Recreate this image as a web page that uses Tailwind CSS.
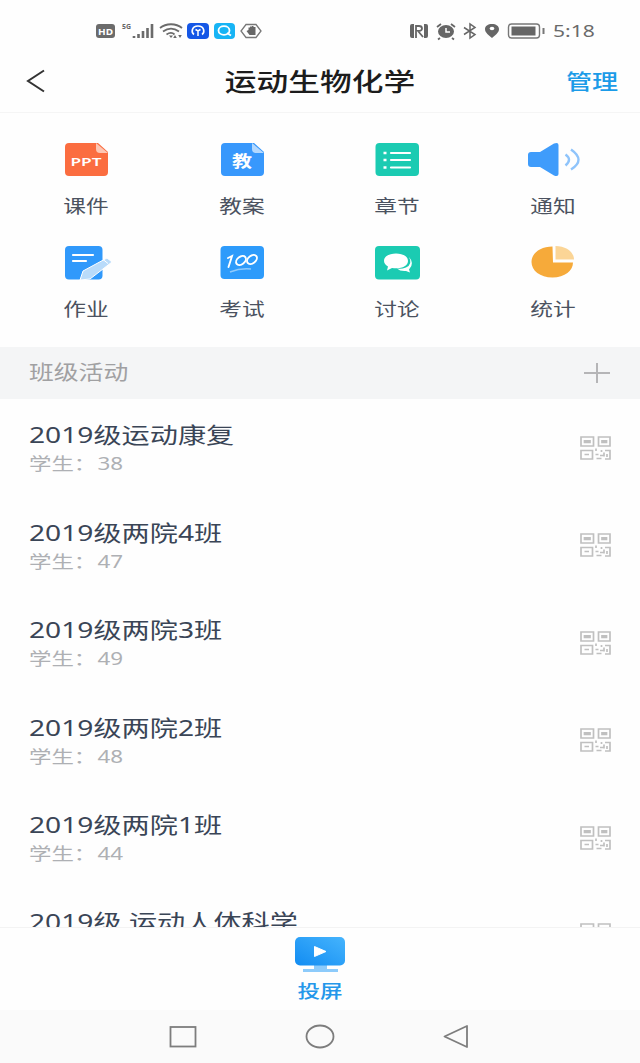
<!DOCTYPE html>
<html lang="zh-CN">

<head>
    <meta charset="UTF-8">
    <meta name="viewport" content="width=device-width, initial-scale=1.0">
    <title>运动生物化学</title>
    <script src="https://cdn.jsdelivr.net/npm/@tailwindcss/browser@4"></script>
</head>

<body class="bg-[#fefefe] font-['Noto_Sans','Noto_Sans_CJK_SC',sans-serif]">
    <!-- QR code icon shared by the class rows -->
    <svg class="hidden">
        <symbol id="qr" viewBox="0 0 31 24">
            <g fill="none" stroke="#c0c0c0" stroke-width="1.700">
                <path d="M1 1h12.500v9H1zM18.500 1h11.500v9H18.500zM1 14.500h11.500v8.500H1z" />
                <path d="M4.500 4.800h5.500v1.500H4.500zM22 4.800h4.500v1.500H22zM4.500 18.500h4.500" />
                <path d="M16 12.500v2.500M15.500 18.500h3M16.500 22.500h5M20 19.500h4M24 16.500v4M25 14.500h5v8.500h-5M27 18v3M21.500 14v2" />
            </g>
        </symbol>
    </svg>

    <div class="flex h-[1063px] w-[640px] flex-col overflow-hidden">
        <!-- Status bar -->
        <div class="flex h-[50px] shrink-0 items-center justify-between pt-[11px] pr-[44px] pl-[95px]">
            <svg class="h-[20px] w-[168px]" viewBox="0 0 168 20" fill="none">
                <rect x="1" y="3" width="19" height="14" rx="3" fill="#6b6b6b" />
                <text x="3" y="13.500" font-size="9.500" font-weight="700" fill="#fff" textLength="15" lengthAdjust="spacingAndGlyphs">HD</text>
                <text x="27" y="8" font-size="7.500" font-weight="700" fill="#666" textLength="9" lengthAdjust="spacingAndGlyphs">5G</text>
                <path d="M39 17v-2M43.500 17v-4M48 17v-7M52.500 17V7M57 17V3" stroke="#6b6b6b" stroke-width="2.600" />
                <path d="M65 7c6-5 16-5 22 0M68 10.500c5-3.500 11-3.500 16 0M71.500 13.500c3-2 6-2 8 0" stroke="#6b6b6b" stroke-width="1.800" />
                <path d="M74 14.500h4l-2 2.500zM80 14l1.800 3h-3.600zM85 17l-1.800-3h3.600z" fill="#6b6b6b" />
                <rect x="92" y="2" width="22" height="16" rx="4" fill="#1557e6" />
                <path d="M99 13.500c-3-2-2.500-8.500 4-8.500s7 6.500 4 8.500" stroke="#fff" stroke-width="1.600" />
                <path d="M100.500 8.500l2.500 1.500 2.500-1.500M103 10v5" stroke="#fff" stroke-width="1.500" />
                <rect x="119" y="2" width="21" height="16" rx="4" fill="#17b4f5" />
                <ellipse cx="129" cy="9.500" rx="5.500" ry="4.300" stroke="#fff" stroke-width="1.800" />
                <path d="M132 12l4 2.500" stroke="#fff" stroke-width="1.800" />
                <path d="M151 3.500h10l5 6.500-5 6.500h-10l-5-6.500z" stroke="#777" stroke-width="1.300" />
                <path d="M151.500 10l2-1V6.500h1.500V5.500h2V5h1.500v1h2V14h-6z" fill="#666" />
            </svg>
            <div class="flex items-center">
                <svg class="h-[20px] w-[138px]" viewBox="0 0 138 20" fill="none">
                    <path d="M5 3h-2Q1 3 1 5v10q0 2 2 2h2zM15 3h2q2 0 2 2v10q0 2-2 2h-2z" fill="#666" />
                    <path d="M7 17V5h3q3 0 3 2.500T9 10l5 6" stroke="#666" stroke-width="1.800" />
                    <ellipse cx="37" cy="10.500" rx="8" ry="6.500" fill="#666" />
                    <path d="M28 6l4-3M46 6l-4-3M31 17l-2 1.500M43 17l2 1.500" stroke="#666" stroke-width="1.800" />
                    <path d="M37 7v4h4" stroke="#fff" stroke-width="1.500" />
                    <path d="M55 6.500l11 7-5 3.500V3l5 3.500-11 7" stroke="#666" stroke-width="1.500" />
                    <path d="M83 3c-4 0-7 2-7 5 0 4 4 6 7 9 3-3 7-5 7-9 0-3-3-5-7-5z" fill="#666" />
                    <ellipse cx="83" cy="7.500" rx="2.300" ry="1.800" fill="#fff" />
                    <rect x="99.500" y="3" width="31" height="14" rx="3" stroke="#777" stroke-width="1.400" />
                    <rect x="102.500" y="5.500" width="24" height="9" fill="#666" />
                    <path d="M134.500 7v6" stroke="#777" stroke-width="2" />
                </svg>
                <span class="ml-[6px] w-[43px] origin-left scale-x-[1.24] text-[17px] leading-5 text-[#6a6a6a]">5:18</span>
            </div>
        </div>

        <!-- Title bar -->
        <div class="grid h-[63px] shrink-0 grid-cols-3 items-center border-b border-[#f5f5f5] pr-[22px] pl-[26px]">
            <svg class="h-[24px] w-[20px]" viewBox="0 0 20 24" fill="none" stroke="#333" stroke-width="2">
                <path d="M18 1.500L2 12l16 10.500" />
            </svg>
            <h1 class="mr-[4px] justify-self-center text-[25px] leading-8 font-medium whitespace-nowrap text-[#1c1c1c] scale-x-[1.27]">运动生物化学</h1>
            <span class="origin-right scale-x-[1.24] justify-self-end text-[21px] leading-8 font-medium text-[#1b9be8]">管理</span>
        </div>

        <!-- Tools -->
        <div class="grid h-[234px] shrink-0 grid-cols-[156px_155px_156px_155px] grid-rows-[103px_103px] pt-[23px] pl-[8px]">
            <div class="flex flex-col items-center gap-[10px]">
                <svg class="h-[48px] w-[60px]" viewBox="0 0 60 48">
                    <path d="M13 7h29l10 9v20q0 4-4 4H13q-4 0-4-4V11q0-4 4-4z" fill="#fb6d40" />
                    <path d="M40 7l12 10H44q-4 0-4-4z" fill="#fdc6b3" />
                    <text x="14.500" y="30" font-size="11.500" font-weight="600" fill="#fff" textLength="31" lengthAdjust="spacingAndGlyphs">PPT</text>
                </svg>
                <span class="text-[18px] leading-6 text-[#4b5260] scale-x-[1.26]">课件</span>
            </div>
            <div class="flex flex-col items-center gap-[10px]">
                <svg class="h-[48px] w-[60px]" viewBox="0 0 60 48">
                    <path d="M13 7h29l10 9v20q0 4-4 4H13q-4 0-4-4V11q0-4 4-4z" fill="#3898fc" />
                    <path d="M40 7l12 10H44q-4 0-4-4z" fill="#b3d8fe" />
                    <text x="20" y="31" font-size="16" font-weight="700" fill="#fff" textLength="20" lengthAdjust="spacingAndGlyphs">教</text>
                </svg>
                <span class="text-[18px] leading-6 text-[#4b5260] scale-x-[1.26]">教案</span>
            </div>
            <div class="flex flex-col items-center gap-[10px]">
                <svg class="h-[48px] w-[60px]" viewBox="0 0 60 48">
                    <rect x="8.500" y="7" width="43.500" height="33" rx="4" fill="#1bcbb2" />
                    <path d="M24 17h19M24 24h19M24 31.500h19" stroke="#fff" stroke-width="2.200" stroke-linecap="round" />
                    <path d="M16.500 17h3M16.500 24h3M16.500 31.500h3" stroke="#fff" stroke-width="2.400" />
                </svg>
                <span class="text-[18px] leading-6 text-[#4b5260] scale-x-[1.26]">章节</span>
            </div>
            <div class="flex flex-col items-center gap-[10px]">
                <svg class="h-[48px] w-[60px]" viewBox="0 0 60 48">
                    <path d="M8 16h9L31 7.500Q35.500 6 35.500 9v29q0 3-4.500 1.500L17 31H8q-3 0-3-3v-9q0-3 3-3z" fill="#3f9cfb" />
                    <path d="M42.500 18.500q7 5 0 11M48 13.500q15 10.500 0 20" fill="none" stroke="#8fc4fb" stroke-width="2.400" />
                </svg>
                <span class="text-[18px] leading-6 text-[#4b5260] scale-x-[1.26]">通知</span>
            </div>
            <div class="flex flex-col items-center gap-[10px]">
                <svg class="h-[48px] w-[60px]" viewBox="0 0 60 48">
                    <rect x="9" y="7" width="37.500" height="33.500" rx="4" fill="#3099fb" />
                    <path d="M17 16h20M17 22h13" stroke="#fff" stroke-width="2.200" stroke-linecap="round" />
                    <path d="M24 41l3-9 24-13 5 4-22 17z" fill="#b9dbfa" stroke="#fff" stroke-width="1" />
                    <path d="M47 20.500l5 4" stroke="#fff" stroke-width="1" />
                </svg>
                <span class="text-[18px] leading-6 text-[#4b5260] scale-x-[1.26]">作业</span>
            </div>
            <div class="flex flex-col items-center gap-[10px]">
                <svg class="h-[48px] w-[60px]" viewBox="0 0 60 48">
                    <rect x="8.500" y="7" width="43.500" height="33" rx="4" fill="#2d9bfb" />
                    <g fill="none" stroke="#fff" stroke-width="1.900" stroke-linecap="round">
                        <path d="M16 19l4-2-3.500 11" />
                        <ellipse cx="29" cy="21.500" rx="5.500" ry="3.700" transform="rotate(-38 29 21.500)" />
                        <ellipse cx="40" cy="20.500" rx="5.500" ry="3.700" transform="rotate(-38 40 20.500)" />
                    </g>
                    <path d="M18 33q10-4 21-3" fill="none" stroke="#8fcafc" stroke-width="1.500" />
                </svg>
                <span class="text-[18px] leading-6 text-[#4b5260] scale-x-[1.26]">考试</span>
            </div>
            <div class="flex flex-col items-center gap-[10px]">
                <svg class="h-[48px] w-[60px]" viewBox="0 0 60 48">
                    <rect x="8" y="7" width="45" height="33.500" rx="4" fill="#1bcbb2" />
                    <path d="M42 18q4 7-3 10.500-5 2-9 1 3 3 9 2.500l4 1.500-1-3q6-6 0-12.500z" fill="#fff" />
                    <path d="M29 14.500c-7 0-12 3-12 7.500 0 2.500 2 4.500 4 5.500l-1 4 5-2.500c9 1.500 16-2 16-7 0-4.500-5-7.500-12-7.500z" fill="#fff" />
                </svg>
                <span class="text-[18px] leading-6 text-[#4b5260] scale-x-[1.26]">讨论</span>
            </div>
            <div class="flex flex-col items-center gap-[10px]">
                <svg class="h-[48px] w-[60px]" viewBox="0 0 60 48">
                    <path d="M29.500 7.500C17 7.500 8.500 14.500 8.500 23S17 38.500 29.500 38.500 50 31.500 50 23.500H30z" fill="#f6aa3a" />
                    <path d="M32.500 7C43 7 51 13 51 20.500H32.500z" fill="#fbd596" />
                </svg>
                <span class="text-[18px] leading-6 text-[#4b5260] scale-x-[1.26]">统计</span>
            </div>
        </div>

        <!-- Section header -->
        <div class="flex h-[52px] shrink-0 items-center justify-between bg-[#f4f5f6] pr-[29px] pl-[29px]">
            <span class="origin-left scale-x-[1.24] text-[20px] leading-7 text-[#a0a0a2]">班级活动</span>
            <svg class="h-[22px] w-[28px]" viewBox="0 0 28 22" stroke="#b5b5b7" stroke-width="2">
                <path d="M1 11h26M14 1v20" />
            </svg>
        </div>

        <!-- Class list -->
        <div class="h-[528px] shrink-0 overflow-hidden">
            <div class="flex h-[97.5px] items-center justify-between pr-[29px] pl-[29px]">
                <div class="origin-left scale-x-[1.28] pt-px whitespace-nowrap">
                    <div class="text-[22px] leading-[30px] text-[#3a4556]">2019级运动康复</div>
                    <div class="text-[17.5px] leading-7 text-[#aeb0b4]">学生：<span class="ml-px">38</span></div>
                </div>
                <svg class="h-[24px] w-[31px]"><use href="#qr" /></svg>
            </div>
            <div class="flex h-[97.5px] items-center justify-between pr-[29px] pl-[29px]">
                <div class="origin-left scale-x-[1.28] pt-px whitespace-nowrap">
                    <div class="text-[22px] leading-[30px] text-[#3a4556]">2019级两院4班</div>
                    <div class="text-[17.5px] leading-7 text-[#aeb0b4]">学生：<span class="ml-px">47</span></div>
                </div>
                <svg class="h-[24px] w-[31px]"><use href="#qr" /></svg>
            </div>
            <div class="flex h-[97.5px] items-center justify-between pr-[29px] pl-[29px]">
                <div class="origin-left scale-x-[1.28] pt-px whitespace-nowrap">
                    <div class="text-[22px] leading-[30px] text-[#3a4556]">2019级两院3班</div>
                    <div class="text-[17.5px] leading-7 text-[#aeb0b4]">学生：<span class="ml-px">49</span></div>
                </div>
                <svg class="h-[24px] w-[31px]"><use href="#qr" /></svg>
            </div>
            <div class="flex h-[97.5px] items-center justify-between pr-[29px] pl-[29px]">
                <div class="origin-left scale-x-[1.28] pt-px whitespace-nowrap">
                    <div class="text-[22px] leading-[30px] text-[#3a4556]">2019级两院2班</div>
                    <div class="text-[17.5px] leading-7 text-[#aeb0b4]">学生：<span class="ml-px">48</span></div>
                </div>
                <svg class="h-[24px] w-[31px]"><use href="#qr" /></svg>
            </div>
            <div class="flex h-[97.5px] items-center justify-between pr-[29px] pl-[29px]">
                <div class="origin-left scale-x-[1.28] pt-px whitespace-nowrap">
                    <div class="text-[22px] leading-[30px] text-[#3a4556]">2019级两院1班</div>
                    <div class="text-[17.5px] leading-7 text-[#aeb0b4]">学生：<span class="ml-px">44</span></div>
                </div>
                <svg class="h-[24px] w-[31px]"><use href="#qr" /></svg>
            </div>
            <!-- last row runs under the bottom bar -->
            <div class="flex h-[97.5px] items-start justify-between pr-[29px] pl-[29px]">
                <div class="origin-left scale-x-[1.28] pt-[19px] text-[22px] leading-[30px] whitespace-nowrap text-[#3a4556]">2019级 运动人体科学</div>
                <svg class="mt-[36px] h-[24px] w-[31px]"><use href="#qr" /></svg>
            </div>
        </div>

        <!-- Screen cast -->
        <div class="flex h-[83px] shrink-0 flex-col items-center border-t border-[#f3f3f3] pt-[9px]">
            <svg class="h-[36px] w-[50px]" viewBox="0 0 50 36">
                <defs>
                    <linearGradient id="screen" x1="0" y1="1" x2="1" y2="0">
                        <stop offset="0" stop-color="#128cf2" />
                        <stop offset="1" stop-color="#45b4fd" />
                    </linearGradient>
                </defs>
                <path d="M19 28h13v4h11v3H8v-3h11z" fill="#8dcbfb" />
                <rect width="50" height="28.500" rx="5" fill="url(#screen)" />
                <path d="M19.500 9.500L31 14.500l-11.500 5z" fill="#fff" stroke="#fff" stroke-linejoin="round" />
            </svg>
            <span class="mt-[6px] text-[18px] leading-6 font-medium text-[#2497ea] scale-x-[1.25]">投屏</span>
        </div>

        <!-- Navigation keys -->
        <div class="flex h-[53px] shrink-0 items-center justify-between bg-[#fafafa] pr-[171px] pl-[169px]">
            <svg class="h-[26px] w-[28px]" viewBox="0 0 28 26" fill="none" stroke="#7d7d7d" stroke-width="1.800">
                <rect x="1.500" y="3" width="25" height="19.500" />
            </svg>
            <svg class="h-[26px] w-[30px]" viewBox="0 0 30 26" fill="none" stroke="#7d7d7d" stroke-width="1.800">
                <ellipse cx="15" cy="12.500" rx="13.500" ry="11" />
            </svg>
            <svg class="h-[26px] w-[26px]" viewBox="0 0 26 26" fill="none" stroke="#7d7d7d" stroke-width="1.800" stroke-linejoin="round">
                <path d="M24 2v21L1.500 12.500z" />
            </svg>
        </div>
    </div>
</body>

</html>
